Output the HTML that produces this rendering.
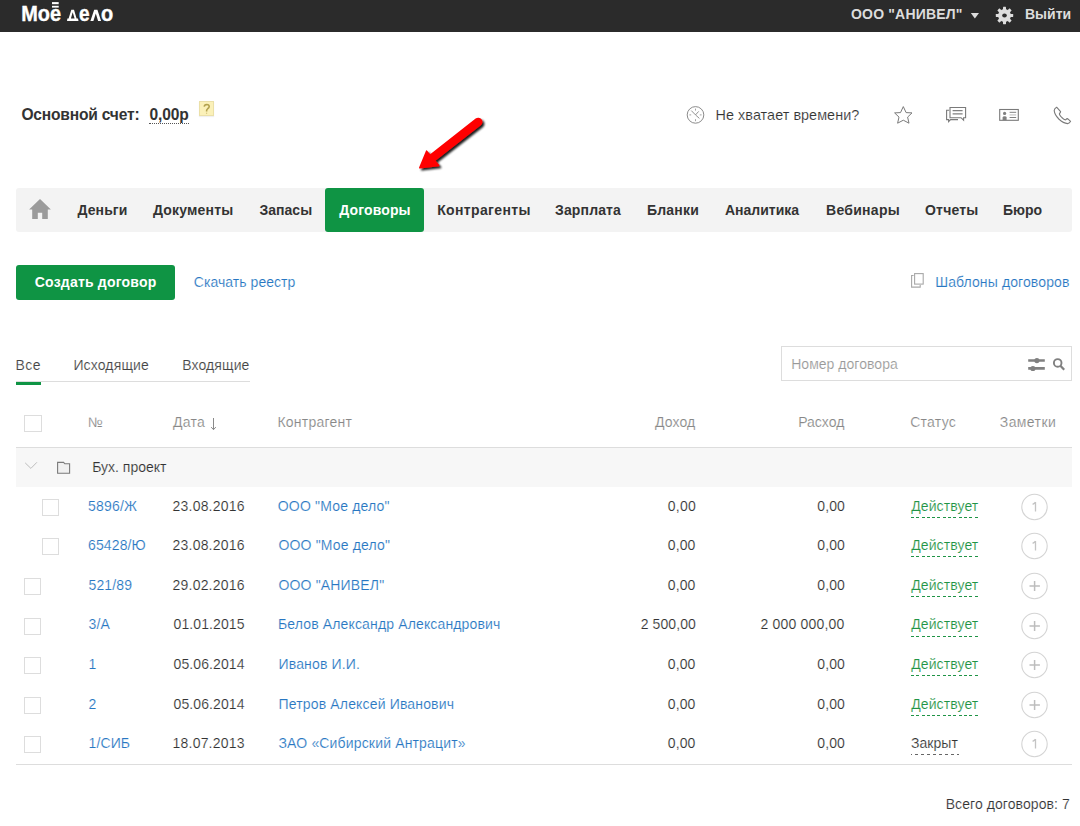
<!DOCTYPE html>
<html><head><meta charset="utf-8">
<style>
*{margin:0;padding:0;box-sizing:border-box}
html,body{width:1080px;height:826px;overflow:hidden;background:#fff}
body{font-family:"Liberation Sans",sans-serif;color:#333;position:relative}
.a{position:absolute;white-space:nowrap;line-height:16px}
.ic{position:absolute;overflow:visible}
.bx{position:absolute}
.cb{position:absolute;width:17px;height:17px;border:1px solid #ddd;background:#fff}
.dash{position:absolute;height:1px}
</style></head><body>
<div class="bx" style="left:0;top:0;width:1080px;height:32px;background:#2b2b2b"></div>
<svg class="ic" style="left:0;top:0" width="120" height="32">
<text x="21.3" y="21.1" font-family="Liberation Sans" font-weight="bold" font-size="22.5" fill="#fff" stroke="#fff" stroke-width="0.4" textLength="39.8" lengthAdjust="spacingAndGlyphs">Мое</text>
<rect x="52" y="2.1" width="6.7" height="2.1" fill="#fff"/><rect x="52" y="5.8" width="6.7" height="1.8" fill="#fff"/>
<path fill="#fff" fill-rule="evenodd" d="M67 21L67.4 18.6H68.6L71.3 9.75H74L76.6 18.6H78L78.5 21ZM70.9 18.6H74.6L72.7 12.2Z"/>
<text x="79" y="21.1" font-family="Liberation Sans" font-weight="bold" font-size="22.5" fill="#fff" stroke="#fff" stroke-width="0.4" textLength="10.6" lengthAdjust="spacingAndGlyphs">е</text>
<path fill="#fff" d="M90.4 21L94.2 9.75H97.4L101.1 21H98.1L95.8 13.4L93.4 21Z"/>
<text x="101" y="21.1" font-family="Liberation Sans" font-weight="bold" font-size="22.5" fill="#fff" stroke="#fff" stroke-width="0.4" textLength="12.2" lengthAdjust="spacingAndGlyphs">о</text>
</svg>
<svg class="ic" style="left:968px;top:10px" width="14" height="12" viewBox="968 10 14 12"><path d="M970.8 13.1H979L974.9 18.4Z" fill="#ddd"/></svg>
<svg class="ic" style="left:994px;top:5px" width="21" height="21" viewBox="-10.5 -10.5 21 21">
<g fill="#ddd"><rect x="-1.5" y="-8.7" width="3" height="3.6" rx="0.4" transform="rotate(0)"/><rect x="-1.5" y="-8.7" width="3" height="3.6" rx="0.4" transform="rotate(45)"/><rect x="-1.5" y="-8.7" width="3" height="3.6" rx="0.4" transform="rotate(90)"/><rect x="-1.5" y="-8.7" width="3" height="3.6" rx="0.4" transform="rotate(135)"/><rect x="-1.5" y="-8.7" width="3" height="3.6" rx="0.4" transform="rotate(180)"/><rect x="-1.5" y="-8.7" width="3" height="3.6" rx="0.4" transform="rotate(225)"/><rect x="-1.5" y="-8.7" width="3" height="3.6" rx="0.4" transform="rotate(270)"/><rect x="-1.5" y="-8.7" width="3" height="3.6" rx="0.4" transform="rotate(315)"/>
<circle r="6.4"/></g><ellipse rx="2.3" ry="1.9" fill="#2b2b2b"/></svg>
<div class="bx" style="left:149px;top:123px;width:40px;border-top:1px dotted #555"></div>
<div class="bx" style="left:199px;top:101px;width:15px;height:15px;background:#fbf1b9;border:1px solid #ebe0a8;box-shadow:0 1px 1px rgba(0,0,0,0.06)"></div><svg class="ic" style="left:199px;top:101px" width="15" height="15" viewBox="199 101 15 15"><path d="M204.2 106.6Q204.4 104.6 206.7 104.5Q209.2 104.6 209.2 106.6Q209.1 107.9 207.6 108.8Q206.6 109.5 206.6 110.8V111.6" fill="none" stroke="#b3a24e" stroke-width="1.6"/><circle cx="206.6" cy="113.2" r="0.7" fill="#d8c880"/></svg>

<svg class="ic" style="left:684px;top:103px" width="24" height="24" viewBox="684 103 24 24">
<circle cx="695.5" cy="114.9" r="8.3" fill="none" stroke="#858585" stroke-width="0.95"/>
<path d="M695.5 108.6V110.6M695.5 119.2V121.2M689.4 114.9H691.2M699.8 114.9H701.6" stroke="#999" stroke-width="0.9"/>
<path d="M691.3 110.6L695.5 114.9L698.7 111.4M695.5 114.9L699.4 118.4" stroke="#858585" stroke-width="0.9" fill="none"/>
</svg>
<svg class="ic" style="left:890px;top:103px" width="26" height="24" viewBox="890 103 26 24">
<path d="M903.3 106.6L906.1 112.6L912 112.9L907.6 117.1L909 123.2L903.3 120.2L897.6 123.2L899 117.1L894.6 112.9L900.5 112.6Z" fill="none" stroke="#7a7a7a" stroke-width="1" stroke-linejoin="round"/>
</svg>
<svg class="ic" style="left:943px;top:104px" width="26" height="20" viewBox="943 104 26 20">
<path d="M949.2 110.3H946.6V119.6H948.6V121.6L950.6 119.6H958" fill="none" stroke="#7a7a7a" stroke-width="1.1"/>
<path d="M950 107.5H965.6V117.7H963.6V120.2L961 117.7H950Z" fill="#fff" stroke="#7a7a7a" stroke-width="1.1"/>
<path d="M952.6 110.6H962.6M952.6 113.9H962.6" stroke="#808080" stroke-width="1.2"/>
</svg>
<svg class="ic" style="left:997px;top:106px" width="24" height="17" viewBox="997 106 24 17">
<rect x="999.7" y="109.5" width="18.6" height="10.8" fill="none" stroke="#7a7a7a" stroke-width="1.1"/>
<circle cx="1004.6" cy="113.4" r="1.6" fill="#808080"/>
<path d="M1002.6 120.2V117.6Q1002.6 116.3 1004.6 116.3Q1006.6 116.3 1006.6 117.6V120.2Z" fill="#808080"/>
<path d="M1009.6 112.3H1016.2M1009.6 117.5H1016.2" stroke="#808080" stroke-width="1"/>
<path d="M1009.6 114.9H1016.2" stroke="#c8c8c8" stroke-width="1.3"/>
</svg>
<svg class="ic" style="left:1050px;top:104px" width="24" height="22" viewBox="1050 104 24 22">
<path d="M1056.6 107.2Q1054.3 108.4 1054.2 110.6Q1054.6 114.6 1058.8 119Q1063.5 123.4 1067.6 123.6Q1069.6 123.4 1070.6 121.3L1067.6 118.6Q1066.6 118.6 1065.6 119.8Q1064.4 120.1 1061.8 117.5Q1059.1 114.6 1059.4 113.6Q1060.5 112.5 1060.6 111.6Z" fill="none" stroke="#7a7a7a" stroke-width="1.1" stroke-linejoin="round"/>
</svg>

<svg class="ic" style="left:400px;top:100px" width="100" height="80" viewBox="400 100 100 80">
<defs><filter id="sh" x="-30%" y="-30%" width="160%" height="160%"><feGaussianBlur in="SourceAlpha" stdDeviation="1.2"/><feOffset dx="1.8" dy="1.8"/><feComponentTransfer><feFuncA type="linear" slope="0.9"/></feComponentTransfer><feMerge><feMergeNode/><feMergeNode in="SourceGraphic"/></feMerge></filter></defs>
<g filter="url(#sh)">
<path d="M478.2 121.9L431.5 158.5" stroke="#f00" stroke-width="8.4" stroke-linecap="round" fill="none"/>
<path d="M426.6 151.2L419.8 167.8L438.6 165.5Z" fill="#f00" stroke="#f00" stroke-width="1.6" stroke-linejoin="round"/>
</g></svg>
<div class="bx" style="left:16px;top:188px;width:1056px;height:44px;background:#f3f3f3;border-radius:3px"></div>
<div class="bx" style="left:325px;top:188px;width:99px;height:44px;background:#0f9444;border-radius:3px"></div>
<svg class="ic" style="left:27px;top:197px" width="26" height="24" viewBox="27 197 26 24">
<path d="M40 198.9L50.9 209.6H47.8V218.9H42.2V212.7H37.8V218.9H32.2V209.6H29.1Z" fill="#9b9b9b"/></svg>
<div class="bx" style="left:16px;top:265px;width:159px;height:35px;background:#0f9444;border-radius:3px"></div>
<svg class="ic" style="left:909px;top:271px" width="18" height="19" viewBox="909 271 18 19">
<path d="M913.6 275.5H911.6V287.1H920.2V285" fill="none" stroke="#a8a8a8" stroke-width="1.1"/>
<rect x="914.6" y="273.6" width="8.6" height="10.5" fill="none" stroke="#a8a8a8" stroke-width="1.1"/>
</svg>
<div class="bx" style="left:781px;top:346px;width:291px;height:35px;border:1px solid #ddd"></div>
<svg class="ic" style="left:1024px;top:352px" width="46" height="24" viewBox="1024 352 46 24">
<path d="M1028.2 360.5H1044.8M1028.2 368.4H1044.8" stroke="#808080" stroke-width="2.7"/>
<circle cx="1036.9" cy="360.6" r="2.6" fill="#808080"/><circle cx="1032.9" cy="368.5" r="2.6" fill="#808080"/>
<circle cx="1057.7" cy="362.9" r="3.8" fill="none" stroke="#808080" stroke-width="1.9"/>
<path d="M1060.4 365.7L1064.2 369.8" stroke="#808080" stroke-width="2.2"/>
</svg>
<div class="bx" style="left:16px;top:381px;width:234px;height:1px;background:#ddd"></div>
<div class="bx" style="left:16px;top:382px;width:25px;height:3px;background:#0f9444"></div>
<div class="cb" style="left:24px;top:415px;width:18px"></div>
<div class="bx" style="left:16px;top:447px;width:1056px;height:1px;background:#ddd"></div>
<div class="bx" style="left:16px;top:448px;width:1056px;height:39px;background:#f7f7f7"></div>
<svg class="ic" style="left:20px;top:455px" width="56" height="24" viewBox="20 455 56 24">
<path d="M25.2 462.9L30.9 468.4L36.9 462.3" fill="none" stroke="#bdbdbd" stroke-width="1"/>
<path d="M57.6 473.3V462.4H63.6L64.8 463.8H69.6V473.3Z" fill="#f0f0f0" stroke="#7a7a7a" stroke-width="1.1"/>
</svg>
<svg class="ic" style="left:208px;top:415px" width="12" height="18" viewBox="208 415 12 18"><path d="M213.5 418V429.6M211.2 427.1L213.5 429.7L215.8 427.1" fill="none" stroke="#8a8a8a" stroke-width="1"/></svg>
<div class="cb" style="left:42px;top:498.79px"></div>
<div class="dash" style="left:911px;top:516.79px;width:69px;background:repeating-linear-gradient(90deg,#1f9446 0 3px,transparent 3px 5.3px)"></div>
<svg class="ic" style="left:1020px;top:492.79px" width="28" height="28" viewBox="0 0 28 28"><circle cx="14.5" cy="14" r="12.7" fill="none" stroke="#d4d4d4" stroke-width="1.1"/><path d="M15.5 9V18.6M15.5 9.2Q14.6 10.6 12.6 11.4" stroke="#c4c4c4" stroke-width="1.3" fill="none"/></svg>
<div class="cb" style="left:42px;top:538.36px"></div>
<div class="dash" style="left:911px;top:556.36px;width:69px;background:repeating-linear-gradient(90deg,#1f9446 0 3px,transparent 3px 5.3px)"></div>
<svg class="ic" style="left:1020px;top:532.36px" width="28" height="28" viewBox="0 0 28 28"><circle cx="14.5" cy="14" r="12.7" fill="none" stroke="#d4d4d4" stroke-width="1.1"/><path d="M15.5 9V18.6M15.5 9.2Q14.6 10.6 12.6 11.4" stroke="#c4c4c4" stroke-width="1.3" fill="none"/></svg>
<div class="cb" style="left:24px;top:577.92px"></div>
<div class="dash" style="left:911px;top:595.92px;width:69px;background:repeating-linear-gradient(90deg,#1f9446 0 3px,transparent 3px 5.3px)"></div>
<svg class="ic" style="left:1020px;top:571.92px" width="28" height="28" viewBox="0 0 28 28"><circle cx="14.5" cy="14" r="12.7" fill="none" stroke="#d4d4d4" stroke-width="1.1"/><path d="M14.6 9V19M9.5 14H19.9" stroke="#bdbdbd" stroke-width="1.5"/></svg>
<div class="cb" style="left:24px;top:617.50px"></div>
<div class="dash" style="left:911px;top:635.50px;width:69px;background:repeating-linear-gradient(90deg,#1f9446 0 3px,transparent 3px 5.3px)"></div>
<svg class="ic" style="left:1020px;top:611.50px" width="28" height="28" viewBox="0 0 28 28"><circle cx="14.5" cy="14" r="12.7" fill="none" stroke="#d4d4d4" stroke-width="1.1"/><path d="M14.6 9V19M9.5 14H19.9" stroke="#bdbdbd" stroke-width="1.5"/></svg>
<div class="cb" style="left:24px;top:657.06px"></div>
<div class="dash" style="left:911px;top:675.06px;width:69px;background:repeating-linear-gradient(90deg,#1f9446 0 3px,transparent 3px 5.3px)"></div>
<svg class="ic" style="left:1020px;top:651.06px" width="28" height="28" viewBox="0 0 28 28"><circle cx="14.5" cy="14" r="12.7" fill="none" stroke="#d4d4d4" stroke-width="1.1"/><path d="M14.6 9V19M9.5 14H19.9" stroke="#bdbdbd" stroke-width="1.5"/></svg>
<div class="cb" style="left:24px;top:696.63px"></div>
<div class="dash" style="left:911px;top:714.63px;width:69px;background:repeating-linear-gradient(90deg,#1f9446 0 3px,transparent 3px 5.3px)"></div>
<svg class="ic" style="left:1020px;top:690.63px" width="28" height="28" viewBox="0 0 28 28"><circle cx="14.5" cy="14" r="12.7" fill="none" stroke="#d4d4d4" stroke-width="1.1"/><path d="M14.6 9V19M9.5 14H19.9" stroke="#bdbdbd" stroke-width="1.5"/></svg>
<div class="cb" style="left:24px;top:736.21px"></div>
<div class="dash" style="left:911px;top:754.21px;width:48px;background:repeating-linear-gradient(90deg,#666 0 1px,transparent 1px 3.6px,#666 3.6px 6px)"></div>
<svg class="ic" style="left:1020px;top:730.21px" width="28" height="28" viewBox="0 0 28 28"><circle cx="14.5" cy="14" r="12.7" fill="none" stroke="#d4d4d4" stroke-width="1.1"/><path d="M15.5 9V18.6M15.5 9.2Q14.6 10.6 12.6 11.4" stroke="#c4c4c4" stroke-width="1.3" fill="none"/></svg>
<div class="bx" style="left:16px;top:764px;width:1056px;height:1px;background:#ddd"></div>
<div class="a" id="org" style="left:851.00px;top:6.00px;font-size:14px;color:#ddd;font-weight:bold;letter-spacing:0.182px">ООО "АНИВЕЛ"</div>
<div class="a" id="exit" style="left:1025.00px;top:6.00px;font-size:14px;color:#ddd;font-weight:bold">Выйти</div>
<div class="a" id="acc" style="left:21.40px;top:106.50px;font-size:15.6px;color:#333;font-weight:bold;letter-spacing:-0.200px">Основной счет:</div>
<div class="a" id="bal" style="left:149.60px;top:106.50px;font-size:15.6px;color:#333;font-weight:bold;letter-spacing:-0.150px">0,00р</div>
<div class="a" id="time" style="left:715.60px;top:107.00px;font-size:14.4px;color:#333;-webkit-text-stroke:0.15px #fff;letter-spacing:0.044px">Не хватает времени?</div>
<div class="a" id="nav0" style="left:77.40px;top:202.00px;font-size:14px;color:#333;font-weight:bold;letter-spacing:0.120px">Деньги</div>
<div class="a" id="nav1" style="left:153.00px;top:202.00px;font-size:14px;color:#333;font-weight:bold;letter-spacing:0.179px">Документы</div>
<div class="a" id="nav2" style="left:259.40px;top:202.00px;font-size:14px;color:#333;font-weight:bold;letter-spacing:0.040px">Запасы</div>
<div class="a" id="nav3" style="left:339.20px;top:202.00px;font-size:14px;color:#fff;font-weight:bold;letter-spacing:0.142px">Договоры</div>
<div class="a" id="nav4" style="left:437.20px;top:202.00px;font-size:14px;color:#333;font-weight:bold;letter-spacing:0.360px">Контрагенты</div>
<div class="a" id="nav5" style="left:555.00px;top:202.00px;font-size:14px;color:#333;font-weight:bold;letter-spacing:0.143px">Зарплата</div>
<div class="a" id="nav6" style="left:647.00px;top:202.00px;font-size:14px;color:#333;font-weight:bold;letter-spacing:0.200px">Бланки</div>
<div class="a" id="nav7" style="left:725.00px;top:202.00px;font-size:14px;color:#333;font-weight:bold">Аналитика</div>
<div class="a" id="nav8" style="left:826.00px;top:202.00px;font-size:14px;color:#333;font-weight:bold;letter-spacing:0.286px">Вебинары</div>
<div class="a" id="nav9" style="left:925.00px;top:202.00px;font-size:14px;color:#333;font-weight:bold;letter-spacing:0.200px">Отчеты</div>
<div class="a" id="nav10" style="left:1003.00px;top:202.00px;font-size:14px;color:#333;font-weight:bold">Бюро</div>
<div class="a" id="create" style="left:34.80px;top:274.00px;font-size:14px;color:#fff;font-weight:bold;letter-spacing:0.199px">Создать договор</div>
<div class="a" id="dl" style="left:193.80px;top:274.00px;font-size:14px;color:#2877c2;-webkit-text-stroke:0.15px #fff;letter-spacing:0.047px">Скачать реестр</div>
<div class="a" id="tpl" style="left:935.20px;top:274.00px;font-size:14px;color:#2877c2;-webkit-text-stroke:0.15px #fff;letter-spacing:0.111px">Шаблоны договоров</div>
<div class="a" id="ph" style="left:791.20px;top:356.00px;font-size:14px;color:#999;-webkit-text-stroke:0.15px #fff;letter-spacing:0.030px">Номер договора</div>
<div class="a" id="t0" style="left:15.60px;top:357.00px;font-size:14px;color:#444;-webkit-text-stroke:0.15px #fff;letter-spacing:0.400px">Все</div>
<div class="a" id="t1" style="left:73.40px;top:357.00px;font-size:14px;color:#444;-webkit-text-stroke:0.15px #fff;letter-spacing:0.146px">Исходящие</div>
<div class="a" id="t2" style="left:182.20px;top:357.00px;font-size:14px;color:#444;-webkit-text-stroke:0.15px #fff;letter-spacing:0.116px">Входящие</div>
<div class="a" id="h0" style="left:88.00px;top:414.00px;font-size:14px;color:#888;-webkit-text-stroke:0.15px #fff;letter-spacing:-0.200px">№</div>
<div class="a" id="h1" style="left:173.00px;top:414.00px;font-size:14px;color:#888;-webkit-text-stroke:0.15px #fff;letter-spacing:0.267px">Дата</div>
<div class="a" id="h2" style="left:277.40px;top:414.00px;font-size:14px;color:#888;-webkit-text-stroke:0.15px #fff;letter-spacing:0.245px">Контрагент</div>
<div class="a" id="h3" style="left:655.00px;top:414.00px;font-size:14px;color:#888;-webkit-text-stroke:0.15px #fff;letter-spacing:0.100px">Доход</div>
<div class="a" id="h4" style="left:798.20px;top:414.00px;font-size:14px;color:#888;-webkit-text-stroke:0.15px #fff">Расход</div>
<div class="a" id="h5" style="left:910.20px;top:414.00px;font-size:14px;color:#888;-webkit-text-stroke:0.15px #fff;letter-spacing:0.280px">Статус</div>
<div class="a" id="h6" style="left:999.80px;top:414.00px;font-size:14px;color:#888;-webkit-text-stroke:0.15px #fff;letter-spacing:0.400px">Заметки</div>
<div class="a" id="grp" style="left:92.20px;top:459.00px;font-size:14px;color:#333;-webkit-text-stroke:0.15px #f7f7f7">Бух. проект</div>
<div class="a" id="total" style="right:10.10px;top:796.00px;font-size:14px;color:#333;-webkit-text-stroke:0.15px #fff;letter-spacing:0.081px">Всего договоров: 7</div>
<div class="a" id="r0n" style="left:88.00px;top:498.00px;font-size:14px;color:#2877c2;-webkit-text-stroke:0.15px #fff;letter-spacing:0.200px">5896/Ж</div>
<div class="a" id="r0d" style="left:172.60px;top:498.00px;font-size:14px;color:#333;-webkit-text-stroke:0.15px #fff;letter-spacing:0.199px">23.08.2016</div>
<div class="a" id="r0c" style="left:277.80px;top:498.00px;font-size:14px;color:#2877c2;-webkit-text-stroke:0.15px #fff;letter-spacing:0.171px">ООО "Мое дело"</div>
<div class="a" id="r0i" style="right:383.92px;top:498.00px;font-size:14px;color:#333;-webkit-text-stroke:0.15px #fff;letter-spacing:0.268px">0,00</div>
<div class="a" id="r0e" style="right:235.00px;top:498.00px;font-size:14px;color:#333;-webkit-text-stroke:0.15px #fff;letter-spacing:0.100px">0,00</div>
<div class="a" id="r0s" style="left:911.20px;top:498.00px;font-size:14px;color:#1f9446;-webkit-text-stroke:0.15px #fff;letter-spacing:0.104px">Действует</div>
<div class="a" id="r1n" style="left:88.00px;top:537.00px;font-size:14px;color:#2877c2;-webkit-text-stroke:0.15px #fff;letter-spacing:0.133px">65428/Ю</div>
<div class="a" id="r1d" style="left:172.60px;top:537.00px;font-size:14px;color:#333;-webkit-text-stroke:0.15px #fff;letter-spacing:0.199px">23.08.2016</div>
<div class="a" id="r1c" style="left:278.50px;top:537.00px;font-size:14px;color:#2877c2;-webkit-text-stroke:0.15px #fff;letter-spacing:0.160px">ООО "Мое дело"</div>
<div class="a" id="r1i" style="right:384.50px;top:537.00px;font-size:14px;color:#333;-webkit-text-stroke:0.15px #fff;letter-spacing:0.100px">0,00</div>
<div class="a" id="r1e" style="right:235.00px;top:537.00px;font-size:14px;color:#333;-webkit-text-stroke:0.15px #fff;letter-spacing:0.100px">0,00</div>
<div class="a" id="r1s" style="left:911.20px;top:537.00px;font-size:14px;color:#1f9446;-webkit-text-stroke:0.15px #fff;letter-spacing:0.104px">Действует</div>
<div class="a" id="r2n" style="left:88.50px;top:577.00px;font-size:14px;color:#2877c2;-webkit-text-stroke:0.15px #fff;letter-spacing:0.120px">521/89</div>
<div class="a" id="r2d" style="left:172.60px;top:577.00px;font-size:14px;color:#333;-webkit-text-stroke:0.15px #fff;letter-spacing:0.199px">29.02.2016</div>
<div class="a" id="r2c" style="left:278.50px;top:577.00px;font-size:14px;color:#2877c2;-webkit-text-stroke:0.15px #fff;letter-spacing:0.160px">ООО "АНИВЕЛ"</div>
<div class="a" id="r2i" style="right:384.50px;top:577.00px;font-size:14px;color:#333;-webkit-text-stroke:0.15px #fff;letter-spacing:0.100px">0,00</div>
<div class="a" id="r2e" style="right:235.00px;top:577.00px;font-size:14px;color:#333;-webkit-text-stroke:0.15px #fff;letter-spacing:0.100px">0,00</div>
<div class="a" id="r2s" style="left:911.20px;top:577.00px;font-size:14px;color:#1f9446;-webkit-text-stroke:0.15px #fff;letter-spacing:0.104px">Действует</div>
<div class="a" id="r3n" style="left:88.50px;top:616.00px;font-size:14px;color:#2877c2;-webkit-text-stroke:0.15px #fff;letter-spacing:0.120px">3/А</div>
<div class="a" id="r3d" style="left:173.60px;top:616.00px;font-size:14px;color:#333;-webkit-text-stroke:0.15px #fff;letter-spacing:0.088px">01.01.2015</div>
<div class="a" id="r3c" style="left:278.00px;top:616.00px;font-size:14px;color:#2877c2;-webkit-text-stroke:0.15px #fff;letter-spacing:0.143px">Белов Александр Александрович</div>
<div class="a" id="r3i" style="right:384.10px;top:616.00px;font-size:14px;color:#333;-webkit-text-stroke:0.15px #fff;letter-spacing:0.085px">2 500,00</div>
<div class="a" id="r3e" style="right:235.61px;top:616.00px;font-size:14px;color:#333;-webkit-text-stroke:0.15px #fff;letter-spacing:0.181px">2 000 000,00</div>
<div class="a" id="r3s" style="left:911.20px;top:616.00px;font-size:14px;color:#1f9446;-webkit-text-stroke:0.15px #fff;letter-spacing:0.104px">Действует</div>
<div class="a" id="r4n" style="left:88.50px;top:656.00px;font-size:14px;color:#2877c2;-webkit-text-stroke:0.15px #fff;letter-spacing:0.120px">1</div>
<div class="a" id="r4d" style="left:173.60px;top:656.00px;font-size:14px;color:#333;-webkit-text-stroke:0.15px #fff;letter-spacing:0.088px">05.06.2014</div>
<div class="a" id="r4c" style="left:278.50px;top:656.00px;font-size:14px;color:#2877c2;-webkit-text-stroke:0.15px #fff;letter-spacing:0.160px">Иванов И.И.</div>
<div class="a" id="r4i" style="right:384.50px;top:656.00px;font-size:14px;color:#333;-webkit-text-stroke:0.15px #fff;letter-spacing:0.100px">0,00</div>
<div class="a" id="r4e" style="right:235.00px;top:656.00px;font-size:14px;color:#333;-webkit-text-stroke:0.15px #fff;letter-spacing:0.100px">0,00</div>
<div class="a" id="r4s" style="left:911.20px;top:656.00px;font-size:14px;color:#1f9446;-webkit-text-stroke:0.15px #fff;letter-spacing:0.104px">Действует</div>
<div class="a" id="r5n" style="left:88.50px;top:696.00px;font-size:14px;color:#2877c2;-webkit-text-stroke:0.15px #fff;letter-spacing:0.120px">2</div>
<div class="a" id="r5d" style="left:173.60px;top:696.00px;font-size:14px;color:#333;-webkit-text-stroke:0.15px #fff;letter-spacing:0.088px">05.06.2014</div>
<div class="a" id="r5c" style="left:278.50px;top:696.00px;font-size:14px;color:#2877c2;-webkit-text-stroke:0.15px #fff;letter-spacing:0.160px">Петров Алексей Иванович</div>
<div class="a" id="r5i" style="right:384.50px;top:696.00px;font-size:14px;color:#333;-webkit-text-stroke:0.15px #fff;letter-spacing:0.100px">0,00</div>
<div class="a" id="r5e" style="right:235.00px;top:696.00px;font-size:14px;color:#333;-webkit-text-stroke:0.15px #fff;letter-spacing:0.100px">0,00</div>
<div class="a" id="r5s" style="left:911.20px;top:696.00px;font-size:14px;color:#1f9446;-webkit-text-stroke:0.15px #fff;letter-spacing:0.104px">Действует</div>
<div class="a" id="r6n" style="left:88.50px;top:735.00px;font-size:14px;color:#2877c2;-webkit-text-stroke:0.15px #fff;letter-spacing:0.120px">1/СИБ</div>
<div class="a" id="r6d" style="left:172.60px;top:735.00px;font-size:14px;color:#333;-webkit-text-stroke:0.15px #fff;letter-spacing:0.199px">18.07.2013</div>
<div class="a" id="r6c" style="left:278.50px;top:735.00px;font-size:14px;color:#2877c2;-webkit-text-stroke:0.15px #fff;letter-spacing:0.160px">ЗАО «Сибирский Антрацит»</div>
<div class="a" id="r6i" style="right:384.50px;top:735.00px;font-size:14px;color:#333;-webkit-text-stroke:0.15px #fff;letter-spacing:0.100px">0,00</div>
<div class="a" id="r6e" style="right:235.00px;top:735.00px;font-size:14px;color:#333;-webkit-text-stroke:0.15px #fff;letter-spacing:0.100px">0,00</div>
<div class="a" id="r6s" style="left:911.00px;top:735.00px;font-size:14px;color:#333;-webkit-text-stroke:0.15px #fff;letter-spacing:0.040px">Закрыт</div>
</body></html>
